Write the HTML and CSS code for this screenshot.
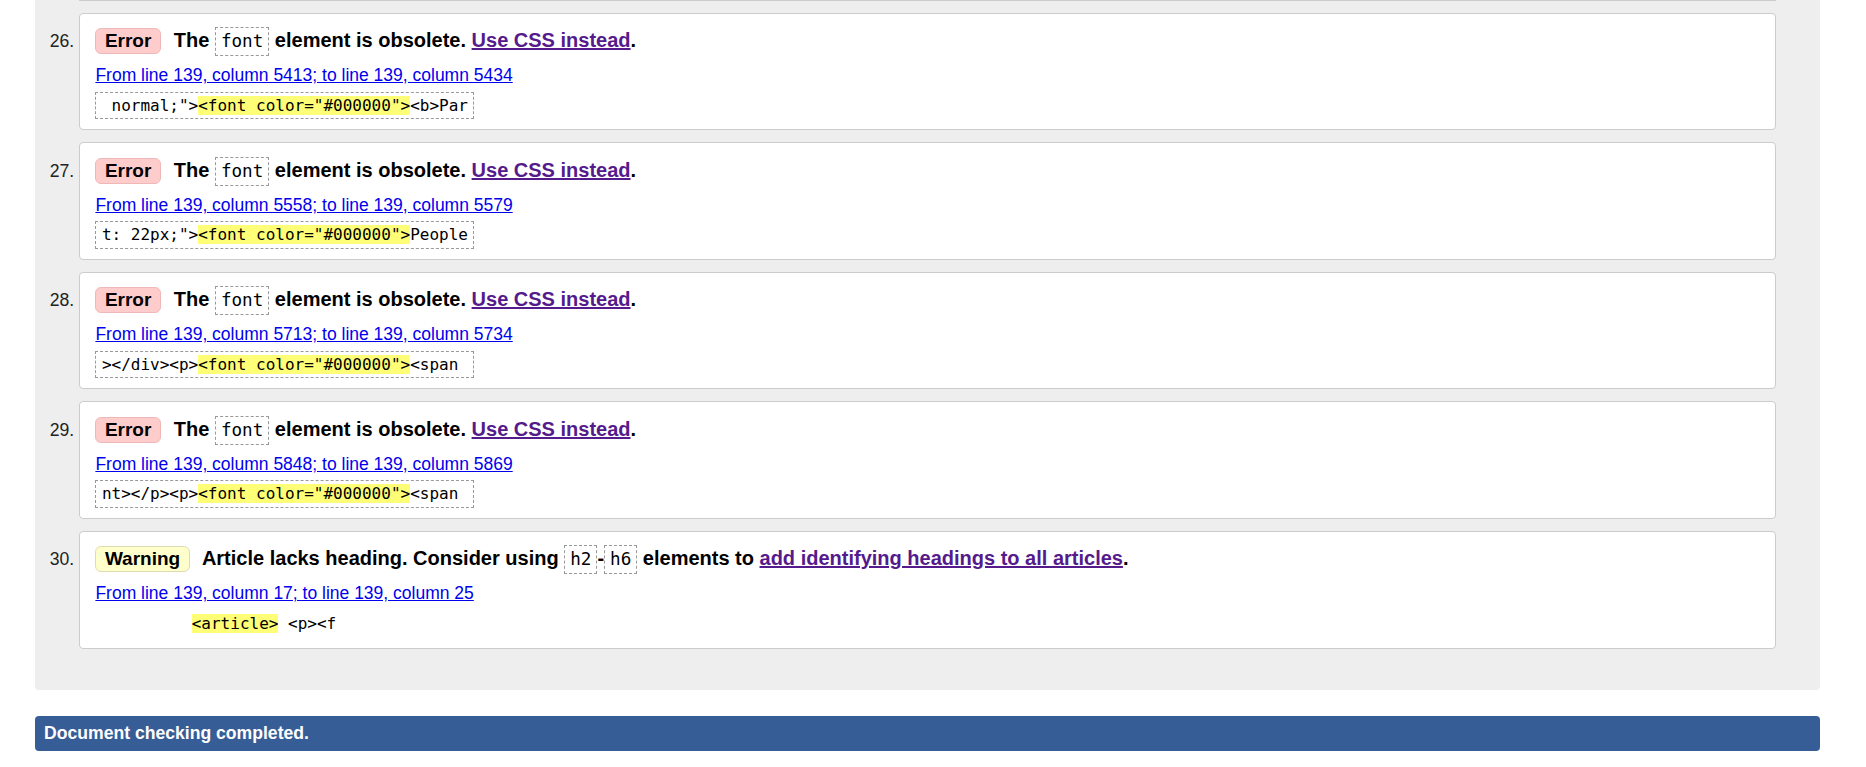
FILE: index.html
```html
<!DOCTYPE html>
<html lang="en">
<head>
<meta charset="utf-8">
<title>Nu Html Checker</title>
<link rel="stylesheet" href="styles.css">
</head>
<body>
<div class="wrap">
  <div class="results">
    <div class="card tail"></div>
    <ol start="26">
      <li class="card">
        <p class="msg"><strong><span class="badge error">Error</span> The <code>font</code> element is obsolete. <a href="#" class="visited">Use CSS instead</a>.</strong></p>
        <p class="loc"><a href="#">From line 139, column 5413; to line 139, column 5434</a></p>
        <p class="extract"><code class="ex"> normal;"&gt;<span class="hl">&lt;font color="#000000"&gt;</span>&lt;b&gt;Par</code></p>
      </li>
      <li class="card">
        <p class="msg"><strong><span class="badge error">Error</span> The <code>font</code> element is obsolete. <a href="#" class="visited">Use CSS instead</a>.</strong></p>
        <p class="loc"><a href="#">From line 139, column 5558; to line 139, column 5579</a></p>
        <p class="extract"><code class="ex">t: 22px;"&gt;<span class="hl">&lt;font color="#000000"&gt;</span>People</code></p>
      </li>
      <li class="card">
        <p class="msg"><strong><span class="badge error">Error</span> The <code>font</code> element is obsolete. <a href="#" class="visited">Use CSS instead</a>.</strong></p>
        <p class="loc"><a href="#">From line 139, column 5713; to line 139, column 5734</a></p>
        <p class="extract"><code class="ex">&gt;&lt;/div&gt;&lt;p&gt;<span class="hl">&lt;font color="#000000"&gt;</span>&lt;span </code></p>
      </li>
      <li class="card">
        <p class="msg"><strong><span class="badge error">Error</span> The <code>font</code> element is obsolete. <a href="#" class="visited">Use CSS instead</a>.</strong></p>
        <p class="loc"><a href="#">From line 139, column 5848; to line 139, column 5869</a></p>
        <p class="extract"><code class="ex">nt&gt;&lt;/p&gt;&lt;p&gt;<span class="hl">&lt;font color="#000000"&gt;</span>&lt;span </code></p>
      </li>
      <li class="card">
        <p class="msg"><strong><span class="badge warning">Warning</span> Article lacks heading. Consider using <code>h2</code>-<code>h6</code> elements to <a href="#" class="visited">add identifying headings to all articles</a>.</strong></p>
        <p class="loc"><a href="#">From line 139, column 17; to line 139, column 25</a></p>
        <p class="extract"><code class="ex plain">          <span class="hl">&lt;article&gt;</span> &lt;p&gt;&lt;f</code></p>
      </li>
    </ol>
  </div>
  <p class="done">Document checking completed.</p>
</div>
</body>
</html>
```
FILE: styles.css
```css
html, body {
  margin: 0;
  padding: 0;
  background: #fff;
}

body {
  font-family: "Liberation Sans", Arial, sans-serif;
  font-size: 17.6px;
  color: #000;
}

.wrap {
  margin-left: 35px;
  width: 1785px;
}

.results {
  background: #eeeeee;
  border-radius: 0 0 4px 4px;
  padding: 0 44px 41.7px;
}

.results ol {
  margin: 0;
  padding: 0;
  list-style: decimal outside;
}

.card {
  background: #fff;
  border: 1px solid #cccccc;
  border-radius: 4px;
}

.card.tail {
  height: 0;
  border-top: none;
  border-radius: 0 0 4px 4px;
  margin-bottom: 11.7px;
}

li.card {
  padding: 12.3px 15.4px 10.3px;
  margin-bottom: 12px;
  color: #000;
}

li.card:last-child {
  margin-bottom: 0;
}

li.card::marker {
  color: #222;
  font-weight: normal;
}

.msg {
  margin: 0;
  height: 29px;
  font-size: 20px;
  line-height: 28px;
  white-space: nowrap;
}

.badge {
  display: inline-block;
  font-size: 19px;
  line-height: 20px;
  padding: 2px 8.5px;
  border: 1px solid;
  border-radius: 6px;
  margin-right: 7.4px;
}

.badge.error {
  background: #ffcccc;
  border-color: #eeb8b8;
}

.badge.warning {
  background: #ffffcc;
  border-color: #dedcb0;
}

.msg code {
  display: inline-block;
  font-family: "DejaVu Sans Mono", monospace;
  font-weight: normal;
  font-size: 17.6px;
  line-height: 27px;
  padding: 0 5px;
  border: 1px dashed #999999;
}

a {
  color: #0000ee;
  text-decoration: underline;
}

a.visited {
  color: #551a8b;
}

.loc {
  margin: 10px 0 0;
  height: 20px;
  font-size: 17.5px;
  line-height: 20px;
}

.extract {
  display: flex;
  margin: 6.7px 0 0;
}

.ex {
  display: block;
  height: 25.3px;
  font-family: "DejaVu Sans Mono", monospace;
  font-size: 16px;
  line-height: 25.3px;
  white-space: pre;
  padding: 0 5.5px;
  border: 1px dashed #999999;
  color: #000;
}

.ex.plain {
  border-color: transparent;
  padding: 0;
  margin-left: -1px;
}

.hl {
  background: #ffff77;
}

.done {
  margin: 26px 0 0;
  height: 35px;
  line-height: 35px;
  padding: 0 9px;
  background: #375d96;
  color: #fff;
  font-weight: bold;
  border-radius: 4px;
}
```
